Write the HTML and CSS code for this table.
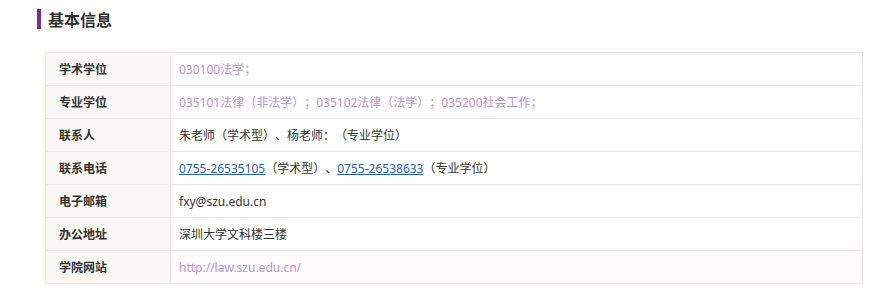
FILE: index.html
```html
<!DOCTYPE html>
<html lang="zh-CN">
<head>
<meta charset="utf-8">
<title>基本信息</title>
<link rel="stylesheet" href="styles.css">
</head>
<body>
<div class="section">
  <h2 class="title">基本信息</h2>
  <table class="info">
    <tr><th>学术学位</th><td><span class="visited">030100法学；</span></td></tr>
    <tr><th>专业学位</th><td><span class="visited">035101法律（非法学）；035102法律（法学）；035200社会工作；</span></td></tr>
    <tr><th>联系人</th><td>朱老师（学术型）、杨老师：（专业学位）</td></tr>
    <tr><th>联系电话</th><td><a class="tel" href="#">0755-26535105</a>（学术型）、<a class="tel" href="#">0755-26538633</a>（专业学位）</td></tr>
    <tr><th>电子邮箱</th><td>fxy@szu.edu.cn</td></tr>
    <tr><th>办公地址</th><td>深圳大学文科楼三楼</td></tr>
    <tr><th>学院网站</th><td class="last"><span class="visited">http://law.szu.edu.cn/</span></td></tr>
  </table>
</div>
</body>
</html>
```
FILE: styles.css
```css
html, body {
  margin: 0;
  padding: 0;
  background: #fff;
}
body {
  font-family: "Noto Sans", "Noto Sans CJK SC", "Microsoft YaHei", sans-serif;
  color: #333;
  text-spacing-trim: space-all;
}
.section {
  padding: 9px 28px 0 37px;
}
.title {
  margin: 0;
  font-family: "Noto Sans CJK SC", sans-serif;
  font-size: 16px;
  font-weight: bold;
  color: #333;
  line-height: 20px;
  border-left: 4px solid #7b2a91;
  padding-left: 7px;
  height: 20px;
}
.info {
  margin: 23px 0 0 8px;
  width: 818px;
  border-collapse: collapse;
  font-size: 12px;
}
.info th, .info td {
  border: 1px solid #ede9e1;
  height: 31px;
  padding: 1px 0 0 0;
  vertical-align: middle;
  line-height: 16px;
}
.info th {
  width: 111px;
  text-align: left;
  padding-left: 13px;
  background: #faf8f4;
  font-weight: bold;
  color: #333;
}
.info td {
  padding-left: 8px;
  color: #333;
  background: #fff;
}
.info td.last {
  background: #fdfcfb;
}
.visited {
  color: #b594d6;
}
.tel {
  color: #1f62ad;
  text-decoration: underline;
}
```
